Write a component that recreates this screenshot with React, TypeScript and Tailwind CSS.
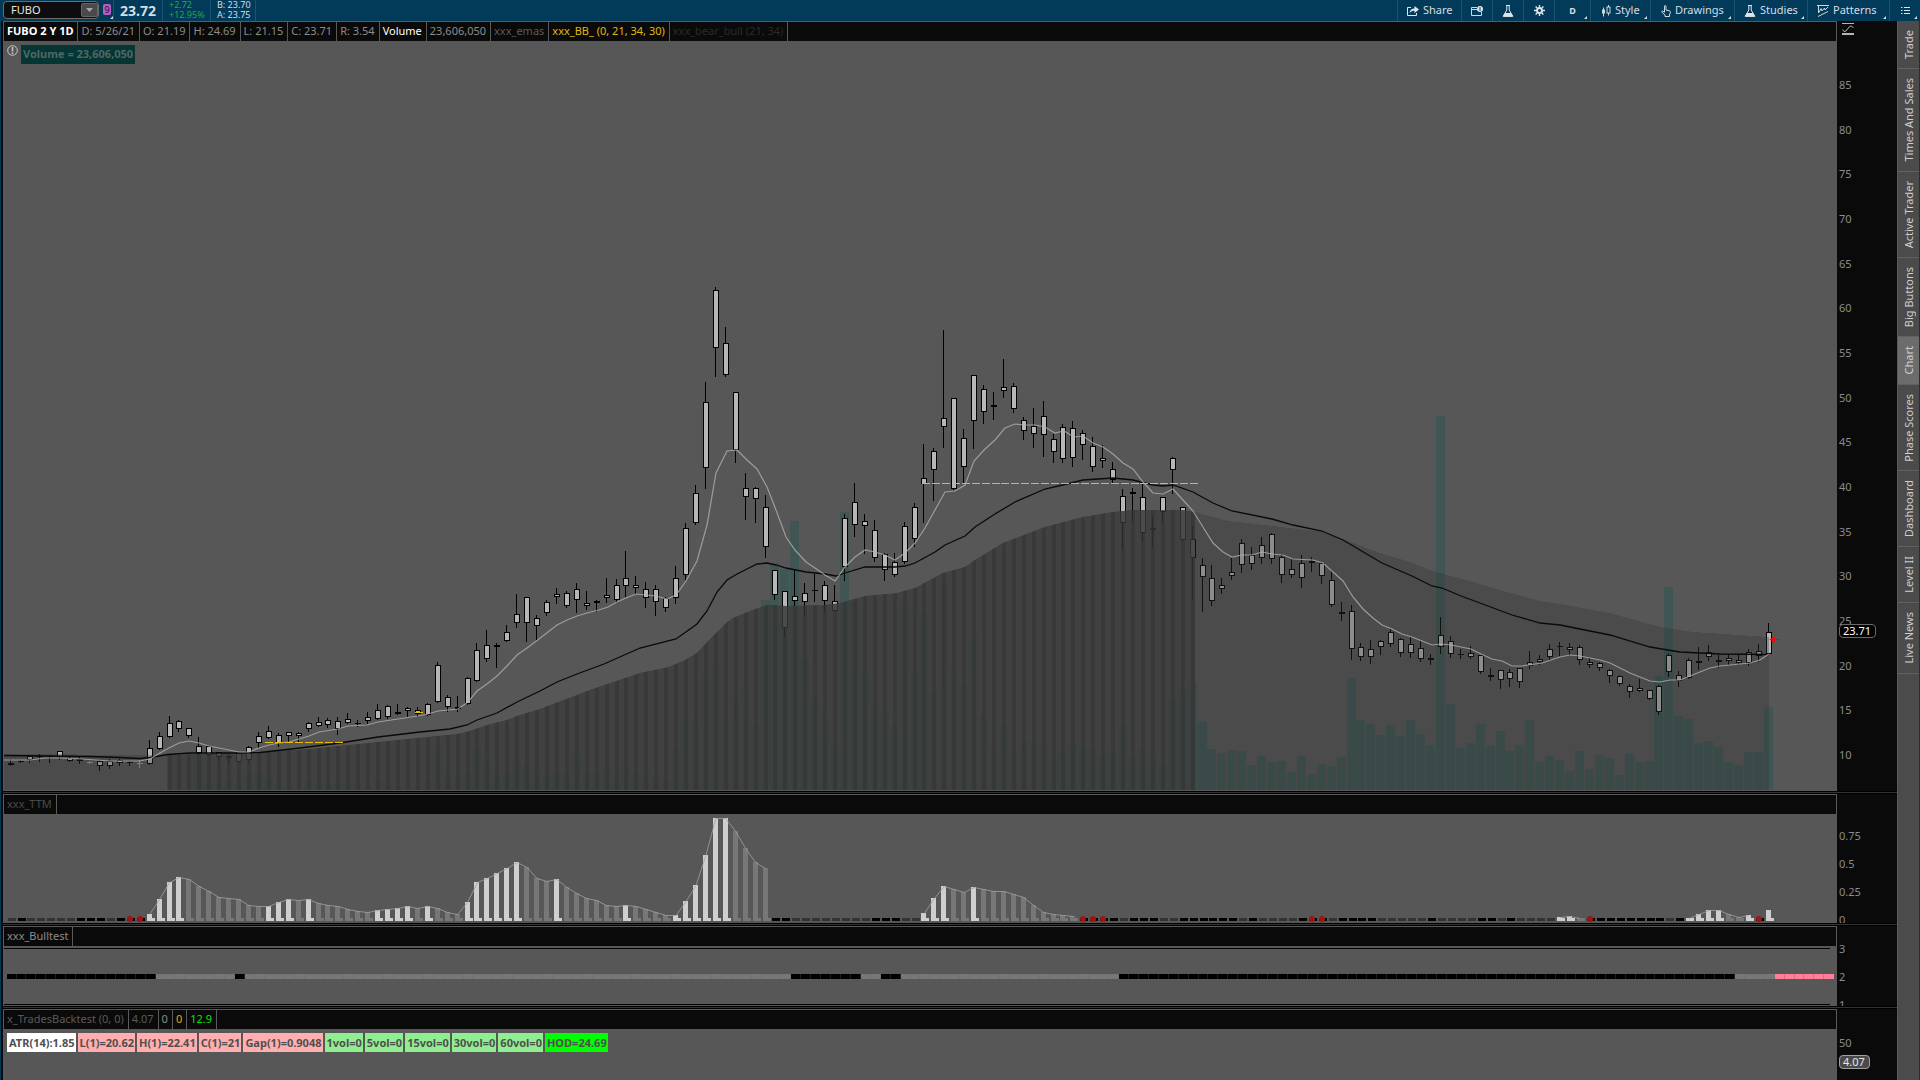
import type { ReactNode } from "react"

const PITCH = 9.933
const barX = (i: number) => 10.6 + i * PITCH

// high, body top, body bottom, low
const candles = [
    [759,763,765,765],[760,761,762,762],[755,756,760,762],[754,756,757,761],[755,756,757,762],[751,751,757,759],
    [757,758,761,761],[757,759,761,763],[761,762,763,763],[760,761,766,770],[759,761,766,768],[759,760,763,765],
    [761,762,763,765],[760,763,764,767],[740,748,764,764],[732,736,749,749],[716,723,737,737],[720,721,729,731],
    [728,728,736,737],[737,746,753,754],[746,746,755,755],[752,752,757,760],[756,756,758,763],[753,753,762,762],
    [746,747,760,762],[732,736,743,747],[726,731,738,738],[733,735,743,746],[732,732,736,742],[732,733,736,741],
    [722,723,729,731],[717,722,726,726],[718,720,725,727],[717,721,729,734],[713,719,723,723],[720,723,724,726],
    [712,717,721,723],[704,710,719,719],[705,706,717,718],[704,712,714,714],[707,708,711,716],[707,710,714,716],
    [703,704,715,715],[662,665,702,702],[695,697,707,711],[696,707,709,711],[677,678,704,704],[643,650,681,681],
    [630,645,659,661],[643,645,647,667],[625,632,641,641],[594,614,623,627],[597,597,623,641],[615,618,626,639],
    [600,602,613,615],[588,594,597,603],[591,593,606,607],[583,589,600,612],[591,603,606,609],[600,601,603,611],
    [578,595,598,602],[579,585,600,602],[551,578,586,596],[576,585,588,593],[582,589,598,607],[585,589,602,615],
    [597,598,608,611],[566,578,598,603],[523,528,575,579],[485,493,523,524],[382,402,468,488],[287,290,348,376],
    [327,343,375,376],[392,392,450,462],[473,488,497,519],[487,488,499,522],[495,507,547,557],[570,570,595,599],
    [591,591,628,637],[569,596,601,605],[583,593,602,615],[574,590,591,601],[581,585,601,612],[585,601,611,611],
    [514,518,567,580],[483,502,525,536],[514,521,526,553],[520,530,558,561],[553,554,570,580],[553,562,575,576],
    [522,526,562,563],[503,507,539,546],[444,478,484,522],[448,451,470,500],[330,418,427,447],[398,398,489,489],
    [429,438,467,483],[375,375,421,448],[385,389,412,423],[392,405,407,419],[359,387,391,397],[383,386,409,412],
    [417,420,431,439],[408,426,434,447],[401,416,435,456],[434,439,452,462],[424,427,459,462],[421,428,458,466],
    [430,433,445,459],[437,446,467,471],[445,458,461,467],[462,469,480,483],[489,496,523,549],[488,492,494,521],
    [483,497,533,541],[516,528,530,547],[497,497,512,521],[457,458,470,493],[507,507,540,540],[526,539,558,599],
    [558,565,577,611],[565,578,601,605],[578,585,589,593],[558,572,576,579],[539,543,565,572],[547,555,564,569],
    [537,545,558,563],[533,534,559,563],[554,557,575,582],[559,569,575,577],[555,563,578,587],[557,561,563,571],
    [562,563,576,583],[570,580,605,606],[602,612,614,620],[605,611,649,659],[643,647,657,660],[640,649,657,663],
    [640,641,647,654],[629,632,644,646],[638,639,653,656],[637,644,653,657],[641,648,659,661],[654,658,660,664],
    [617,635,647,653],[636,641,654,657],[649,654,655,658],[646,653,657,658],[655,655,672,673],[668,675,677,680],
    [670,670,680,688],[669,672,679,686],[668,668,682,687],[651,662,666,668],[655,659,662,664],[644,649,657,659],
    [642,646,647,655],[643,647,650,655],[645,647,660,664],[658,662,665,667],[662,663,668,670],[669,670,676,682],
    [675,676,684,685],[684,686,692,697],[679,688,691,691],[690,690,699,699],[685,686,712,714],[653,655,672,676],
    [671,675,681,686],[658,660,678,678],[647,661,663,669],[645,652,657,660],[655,660,662,667],[654,658,661,664],
    [655,660,663,664],[649,652,663,665],[644,651,656,661],[623,632,654,654],
]

// top of each volume bar, starting at bar 19
const volume = [
    753,783,784,779,785,773,772,778,784,786,785,781,783,784,782,783,784,785,780,785,786,784,786,779,746,774,775,774,
    747,762,775,773,761,765,771,777,771,773,754,773,774,766,775,762,774,770,775,780,749,719,721,675,664,720,697,686,
    723,600,563,569,521,658,698,717,744,512,602,674,705,712,725,603,672,614,692,582,671,684,634,716,751,725,753,742,
    742,745,760,752,744,747,750,755,750,725,756,748,756,764,698,690,683,722,749,753,750,751,765,756,762,761,772,756,
    774,764,766,757,678,720,724,735,725,736,720,734,745,416,704,748,743,724,746,731,751,745,720,762,756,760,771,751,
    769,755,758,775,754,762,761,676,587,716,719,743,741,747,762,765,752,752,707,
]

const fastLine =
    "4,760 30,760 45,758 60,758 82,759 110,761 139,761 150,759 160,753 169,748 179,743 189,741 199,743 209,746 229,750 239,752 249,752 259,748 269,745 279,743 289,742 299,739 309,736 319,732 338,729 348,726 367,725 378,722 398,719 418,716 428,714 438,711 458,709 468,702 477,691 487,684 497,676 507,666 517,655 527,648 539,639 557,625 567,620 577,616 587,613 599,610 608,607 617,602 626,598 636,594 646,595 656,596 667,599 676,595 686,581 697,561 707,525 716,473 727,451 737,450 747,460 757,469 767,487 776,510 786,537 795,550 806,562 815,568 825,575 835,581 845,567 855,557 865,550 875,552 885,555 895,560 905,553 915,543 925,528 935,510 945,492 955,491 965,485 974,461 984,450 995,440 1005,428 1015,424 1025,425 1035,425 1045,427 1055,433 1064,431 1074,437 1083,436 1093,443 1103,447 1113,454 1123,463 1133,469 1143,482 1153,493 1163,494 1173,489 1183,500 1193,511 1203,527 1213,543 1223,552 1232,557 1242,555 1252,555 1262,552 1272,554 1283,555 1293,559 1313,560 1323,563 1333,572 1343,581 1353,597 1363,609 1373,618 1382,625 1392,629 1402,634 1412,637 1422,641 1432,645 1441,644 1451,645 1471,649 1481,654 1492,659 1502,661 1512,666 1522,666 1542,663 1560,657 1570,655 1580,656 1600,660 1610,663 1630,673 1650,681 1660,682 1670,680 1680,680 1700,672 1710,668 1720,666 1740,664 1750,663 1760,660 1769,654"

const slowLine =
    "4,755.5 90,756.5 120,757.5 140,758.5 150,757.5 168,754.5 190,753 240,753 260,752.5 300,748 340,743 378,737 420,732 450,729 467,725 477,720 497,713 517,702 540,691 557,682 577,674 604,664 640,648 676,639 697,624 707,611 717,592 727,580 737,574 747,569 757,564 767,563 776,565 786,568 806,572 825,574 836,576 845,573 865,567 895,567 905,566 915,563 935,552 945,545 965,536 975,527 995,514 1015,502 1045,489 1067,484 1083,480 1113,478 1133,480 1153,485 1163,486 1173,485 1193,492 1213,503 1232,511 1272,519 1293,525 1322,531 1343,540 1382,563 1412,576 1432,586 1442,588 1461,596 1480,603 1512,615 1540,623 1560,625 1610,635 1650,647 1680,652 1720,654 1769,654.5"

const cloud =
    "4,790 4,754 150,755 167,755 240,753 260,752 309,749 348,745 398,740 457,734 470,731 487,725 507,720 517,716 540,709 590,690 640,673 669,667 685,660 697,653 709,640 717,632 726,623 733,618 750,611 767,605 787,606 825,605 840,603 865,596 897,593 915,588 943,573 965,567 975,560 1003,543 1045,527 1083,517 1113,512 1133,510 1183,510 1195,512 1213,517 1228,521 1273,526 1323,532 1340,538 1380,553 1407,561 1433,571 1473,582 1507,592 1540,601 1560,604 1610,613 1660,627 1693,632 1769,637 1769,790"

// runs of momentum bars: first index, tops, and w (rising) or g (falling) for each
const momentum = [
    {
        start: 14,
        tops: [914,899,882,877,879,886,891,897,898,899,905,906,906,902,899,900,899,903,905,906,909,911,912,910,909,908,906,908,906,908,912,914,902,882,878,873,868,862,867,878,881,879,887,893,898,900,905,906,905,906,909,912,915,915,901,885,855,818,818,831,848,862,868],
        kinds: "wwwwggggggggwwwgwggggggwwwwgwgggwwwwwwgggwggggggwggggwwwwwwgggg",
    },
    { start: 92, tops: [913,898,886,889,892,887,889,891,891,894,897,905,912,914,915,916], kinds: "wwwggwgggggggggg" },
    { start: 156, tops: [917,916,918], kinds: "wwg" },
    { start: 169, tops: [918,914,910,910,914,917,915], kinds: "wwwwggw" },
    { start: 177, tops: [910], kinds: "w" },
]

// squeeze row: d = normal, k = squeeze, r = fired
const squeeze = [
    { start: 0, states: "dkdddddkkkdkrr" },
    { start: 77, states: "kkddddddddkkkdd" },
    { start: 108, states: "rrrkdkkkddkkkkkkdkddddkrrdkkkkdddddkddddkkdkdddd" },
    { start: 159, states: "rkkkkkkkdk" },
    { start: 176, states: "r" },
]

const trend = [
    { from: 0, to: 14, fill: "#000000" },
    { from: 15, to: 22, fill: "#777777" },
    { from: 23, to: 23, fill: "#000000" },
    { from: 24, to: 78, fill: "#777777" },
    { from: 79, to: 85, fill: "#000000" },
    { from: 86, to: 87, fill: "#777777" },
    { from: 88, to: 89, fill: "#000000" },
    { from: 90, to: 111, fill: "#777777" },
    { from: 112, to: 173, fill: "#000000" },
    { from: 174, to: 177, fill: "#777777" },
    { from: 178, to: 183, fill: "#ff7f9b" },
]

const tabs = ["Trade", "Times And Sales", "Active Trader", "Big Buttons", "Chart", "Phase Scores", "Dashboard", "Level II", "Live News"]
const prices = [85, 80, 75, 70, 65, 60, 55, 50, 45, 40, 35, 30, 25, 20, 15, 10]

const labels = [
    { text: "ATR(14):1.85", color: "bg-white" },
    { text: "L(1)=20.62", color: "bg-[#ffafaf]" },
    { text: "H(1)=22.41", color: "bg-[#ffafaf]" },
    { text: "C(1)=21", color: "bg-[#ffafaf]" },
    { text: "Gap(1)=0.9048", color: "bg-[#ffafaf]" },
    { text: "1vol=0", color: "bg-[#90ee90]" },
    { text: "5vol=0", color: "bg-[#90ee90]" },
    { text: "15vol=0", color: "bg-[#90ee90]" },
    { text: "30vol=0", color: "bg-[#90ee90]" },
    { text: "60vol=0", color: "bg-[#90ee90]" },
    { text: "HOD=24.69", color: "bg-[#00ff00]" },
]

const Candle = ({ i }: { i: number }) => {
    const [high, top, bottom, low] = candles[i]
    const x = Math.round(barX(i))
    const flat = bottom - top < 3
    const ink = i === 8 || i === 13 ? "#a0a0a0" : "#000000"
    return (
        <g>
            <rect x={x - 1} y={high} width={1} height={low - high + 1} fill={ink} />
            <rect x={x - 3} y={top} width={6} height={bottom - top} fill={ink} />
            {!flat && <rect x={x - 2} y={top + 1} width={4} height={bottom - top - 2} fill="#b7b7b7" />}
        </g>
    )
}

const PriceChart = () => (
    <svg className="block h-full w-full" viewBox="4 41 1833 749" preserveAspectRatio="none" shapeRendering="crispEdges">
        <defs>
            <clipPath id="cloud">
                <polygon points={cloud} />
            </clipPath>
        </defs>
        {volume.map((top, n) => (
            <rect key={n} x={Math.round(barX(n + 19)) - 5} y={top} width={9} height={790 - top} fill="#3f5654" />
        ))}
        {candles.map((_, i) => <Candle key={i} i={i} />)}
        <polygon points={cloud} fill="#313131" opacity={0.32} />
        <g clipPath="url(#cloud)">
            <rect x={167} y={400} width={1028} height={390} fill="#3d3d3d" opacity={0.69} />
            {candles.map((_, i) => i > 15 && i < 120 && (
                <rect key={i} x={Math.round(barX(i)) - 2} y={400} width={4} height={390} fill="#000000" opacity={0.11} />
            ))}
        </g>
        <g shapeRendering="auto" fill="none">
            <polyline points={slowLine} stroke="#0a0a0a" strokeWidth={1.3} />
            <polyline points={fastLine} stroke="#b4b4b4" strokeOpacity={0.75} strokeWidth={1.2} />
        </g>
        <g stroke="#e6bd00" strokeWidth={1} strokeDasharray="8 1.93">
            <line x1={265} y1={742.5} x2={343} y2={742.5} />
            <line x1={415} y1={712.5} x2={423} y2={712.5} />
            <line x1={922} y1={483.5} x2={1198} y2={483.5} />
        </g>
        <path d="M1769 639.5 L1775 636.5 V639 H1780 V640 H1775 V642.5 Z" fill="#ff0000" shapeRendering="auto" />
    </svg>
)

const MomentumChart = () => (
    <svg className="block h-full w-full" viewBox="4 814 1833 109" preserveAspectRatio="none" shapeRendering="crispEdges">
        {momentum.map((run) => (
            <g key={run.start}>
                {run.tops.map((top, n) => {
                    const x = Math.round(barX(run.start + n))
                    const fill = run.kinds[n] === "w" ? "#cfcfcf" : "#777777"
                    return (
                        <g key={n} fill={fill}>
                            <rect x={x - 3} y={top} width={5} height={921 - top} />
                            <rect x={x - 3} y={918} width={8} height={3} />
                        </g>
                    )
                })}
                <polyline
                    points={run.tops.map((top, n) => `${barX(run.start + n)},${top + 0.5}`).join(" ")}
                    fill="none"
                    stroke="#a0a0a0"
                    strokeOpacity={0.8}
                    strokeWidth={1}
                    shapeRendering="auto"
                />
            </g>
        ))}
        {squeeze.map((run) =>
            run.states.split("").map((state, n) => {
                const x = Math.round(barX(run.start + n))
                return (
                    <g key={run.start + n}>
                        <rect x={x - 3} y={918} width={8} height={3} fill={state === "d" ? "#333333" : "#000000"} />
                        {state === "r" && <circle cx={x} cy={919} r={3} fill="#a01414" shapeRendering="auto" />}
                    </g>
                )
            })
        )}
    </svg>
)

const TrendChart = () => (
    <svg className="block h-full w-full" viewBox="4 946 1833 60" preserveAspectRatio="none" shapeRendering="crispEdges">
        <rect x={4} y={948} width={1826} height={1} />
        <rect x={4} y={1004} width={1826} height={1} />
        {trend.map((run) => (
            <rect key={run.from} x={barX(run.from) - 4} y={974} width={(run.to - run.from + 1) * PITCH} height={5} fill={run.fill} />
        ))}
        {Array.from({ length: 184 }, (_, i) => (
            <rect key={i} x={Math.round(barX(i)) - 5} y={974} width={1} height={5} fill="#606060" opacity={0.3} />
        ))}
    </svg>
)

const BacktestChart = () => (
    <svg className="block h-full w-full" viewBox="4 1052 1833 28" preserveAspectRatio="none">
        <path
            d="M20 1062 h15 M92 1066 l10 -1 M145 1060 l10 -3 8 2 5 -1 M190 1068 l8 2 5 -2 M245 1058 l10 -2 8 3 M305 1060 l8 2 M370 1061 l20 1 M465 1058 l10 -2 8 4 M560 1061 l10 1 M672 1060 l20 -4 12 -1 M738 1071 l12 -2 10 2 24 -1 M840 1060 l6 -5 6 4 M868 1067 l16 1 M903 1057 l12 4 18 -1 M970 1057 l4 -3 6 5 M1180 1070 l12 -2 18 1 M1225 1063 l20 -3 M1330 1066 l24 3 M1432 1060 l12 0 M1520 1062 l26 1 M1690 1061 l10 0"
            fill="none"
            stroke="#4f6650"
            strokeWidth={1}
            opacity={0.5}
        />
    </svg>
)

const Cell = ({ children, color = "text-[#8c8c8c]" }: { children: ReactNode, color?: string }) => (
    <span className={`flex items-center whitespace-nowrap border-r border-[#5a5a5a] pl-[3px] pr-1 ${color}`}>{children}</span>
)

const Header = ({ children }: { children: ReactNode }) => (
    <div className="flex h-[19px] shrink-0 border-r border-[#5a5a5a] bg-[#0a0a0a]">{children}</div>
)

const Splitter = () => <div className="h-[3px] shrink-0 border-y border-black bg-[#333]" />

const Corner = () => <span className="absolute bottom-[2px] right-[3px] border-b-[3px] border-l-[3px] border-b-[#d8dde0] border-l-transparent" />

type ToolProps = { children: ReactNode, width: string, label: string, corner?: boolean }

const Tool = ({ children, width, label, corner }: ToolProps) => (
    <button aria-label={label} className={`relative flex items-center gap-1 border-l border-[#1d5272] ${width}`}>
        {children}
        {corner && <Corner />}
    </button>
)

const Flask = () => (
    <svg className="h-3 w-3 shrink-0" viewBox="0 0 12 12" fill="none" stroke="#dfe5e8">
        <path d="M4 .5h4M4.8 1v4L1.2 11.4h9.6L7.200 5V1" />
        <path d="M3 8.500h6l1.500 2.500h-9z" fill="#dfe5e8" />
    </svg>
)

const TopBar = () => (
    <header className="flex h-[21px] shrink-0 items-stretch bg-[#023a5a] text-[#d5dde2]">
        <div className="ml-[3px] mt-px flex h-[18px] w-24 items-center rounded-sm border border-[#6b6b6b] bg-[#0d0d0d]">
            <input aria-label="Symbol" defaultValue="FUBO" className="w-0 flex-1 bg-transparent pl-[7px] text-[11px] text-[#e6e6e6] outline-none" />
            <button aria-label="Symbol list" className="flex h-[14px] w-[17px] items-center justify-center rounded-xs border border-[#666] bg-[#4a4a4a]">
                <svg className="h-1 w-[7px]" viewBox="0 0 7 4"><path d="M0 0h7L3.500 4z" fill="#a8a8a8" /></svg>
            </button>
        </div>
        <div className="relative ml-1 w-[10px]">
            <span className="mt-1 flex h-[11px] w-2 items-center justify-center rounded-xs bg-[#b85cc8] text-[9px] leading-[11px] text-[#230a2a]">9</span>
            <span className="absolute bottom-[2px] right-0 border-b-[3px] border-l-[3px] border-b-[#d8dde0] border-l-transparent" />
        </div>
        <div className="flex w-[49px] items-center border-l border-[#1d5272] pl-1.5 text-[14px] font-bold leading-none">23.72</div>
        <div className="w-[48px] border-l border-[#1d5272] pl-1.5 text-[9px] leading-[10px] text-[#1fae3f]">
            <div>+2.72</div>
            <div>+12.95%</div>
        </div>
        <div className="w-[46px] whitespace-nowrap border-x border-[#1d5272] pl-1.5 text-[9px] leading-[10px]">
            <div>B: 23.70</div>
            <div>A: 23.75</div>
        </div>
        <div className="ml-auto flex text-[11px]">
            <Tool label="Share" width="w-16 pl-[9px]">
                <svg className="h-[11px] w-3 shrink-0" viewBox="0 0 12 11" fill="none" stroke="#dfe5e8">
                    <path d="M4 2.500H.5v8h9V8" />
                    <path d="M2.500 8c.5-3 2-4.500 5-4.500V1L12 4.500 7.500 8V5.800C5.500 5.800 4 6.300 2.500 8z" fill="#dfe5e8" stroke="none" />
                </svg>
                Share
            </Tool>
            <Tool label="Detach" width="w-[31px] justify-center">
                <svg className="h-[10px] w-3" viewBox="0 0 12 10" fill="none" stroke="#cfd8dd">
                    <path d="M6 1.500H.5v8h10V6M.5 3.500H6" />
                    <circle cx="9" cy="3" r="3" fill="#dfe5e8" stroke="none" />
                    <path d="M9 1.200v3.600" stroke="#023a5a" />
                </svg>
            </Tool>
            <Tool label="Lab" width="w-[31px] justify-center"><Flask /></Tool>
            <Tool label="Settings" width="w-[31px] justify-center">
                <svg className="h-[11px] w-[11px]" viewBox="0 0 11 11" fill="none" stroke="#dfe5e8">
                    <circle cx="5.500" cy="5.500" r="2.500" strokeWidth="2" />
                    <path d="M5.500 0v2M5.500 9v2M0 5.500h2M9 5.500h2M1.600 1.600l1.500 1.500M7.900 7.900l1.500 1.500M9.400 1.600L7.900 3.100M3.100 7.900L1.600 9.400" strokeWidth="1.400" />
                </svg>
            </Tool>
            <Tool label="Day" width="w-9 justify-center text-[9px] font-bold" corner>D</Tool>
            <Tool label="Style" width="w-[60px] pl-[10px]" corner>
                <svg className="h-3 w-[10px] shrink-0" viewBox="0 0 10 12" fill="none" stroke="#cfd8dd">
                    <path d="M2.500 2.500v9M7.500 0v2M7.500 8v2.500" />
                    <rect x="1" y="4.500" width="3" height="4" fill="#cfd8dd" stroke="none" />
                    <rect x="6" y="2" width="3" height="6" />
                </svg>
                Style
            </Tool>
            <Tool label="Drawings" width="w-[84px] pl-[10px]" corner>
                <svg className="h-3 w-[10px] shrink-0" viewBox="0 0 10 12" fill="none" stroke="#cfd8dd">
                    <path d="M3.500 7V1.200c0-1 1.500-1 1.500 0V5l3.500.8c1 .3 1 1 .8 2L8.500 10v1.500H4V10L.8 7.200c-.5-.8.5-1.500 1.200-1L3.500 7.500" />
                </svg>
                Drawings
            </Tool>
            <Tool label="Studies" width="w-[73px] pl-[9px]" corner><Flask />Studies</Tool>
            <Tool label="Patterns" width="w-[82px] pl-[9px]" corner>
                <svg className="h-3 w-3 shrink-0" viewBox="0 0 12 12" fill="none" stroke="#cfd8dd">
                    <path d="M0 .5h12M1 11.500l10-5M1.500 1v7L4 3.500 5 6l2.500-3L8 5l3-3" />
                </svg>
                Patterns
            </Tool>
            <Tool label="Menu" width="w-[31px] justify-center" corner>
                <svg className="h-[9px] w-[9px]" viewBox="0 0 9 9" stroke="#dfe5e8">
                    <path d="M0 1.500h1.500M3 1.500h6M0 4.500h1.500M3 4.500h6M0 7.500h1.500M3 7.500h6" />
                </svg>
            </Tool>
        </div>
    </header>
)

const Axis = ({ children }: { children?: ReactNode }) => (
    <div className="relative flex w-[60px] shrink-0 flex-col overflow-hidden bg-[#0a0a0a] pl-0.5 text-[11px] leading-[16px] text-[#8c8c8c]">{children}</div>
)

const SideTabs = () => (
    <nav className="flex w-[23px] shrink-0 flex-col border-l border-r border-l-[#5a5a5a] border-r-[#023a5a] bg-[#4b4b4b] text-[11px] leading-[20px] text-[#cfcfcf]">
        {tabs.map((tab) => (
            <button key={tab} className={`flex justify-center border-b border-[#616161] py-[9px] ${tab === "Chart" ? "bg-[#6c6c6c]" : ""}`}>
                <span className="rotate-180 [writing-mode:vertical-rl]">{tab}</span>
            </button>
        ))}
    </nav>
)

export default function App() {
    return (
        <div className="flex h-screen min-h-[640px] flex-col overflow-hidden bg-[#0a0a0a] font-['Noto_Sans',sans-serif]">
            <TopBar />
            <div className="flex min-h-0 flex-1">
                <div className="w-[3px] shrink-0 border-l border-[#023a5a]" />
                <main className="flex min-w-0 flex-1 flex-col text-[11px]">
                    <section className="flex min-h-0 flex-1">
                        <div className="flex min-w-0 flex-1 flex-col border-l border-y border-[#5a5a5a]">
                            <Header>
                                <Cell color="font-bold text-white">FUBO 2 Y 1D</Cell>
                                <Cell>D: 5/26/21</Cell>
                                <Cell>O: 21.19</Cell>
                                <Cell>H: 24.69</Cell>
                                <Cell>L: 21.15</Cell>
                                <Cell>C: 23.71</Cell>
                                <Cell>R: 3.54</Cell>
                                <Cell color="text-white">Volume</Cell>
                                <Cell>23,606,050</Cell>
                                <Cell color="text-[#5a5a5a]">xxx_emas</Cell>
                                <Cell color="text-[#e0b814]">xxx_BB_ (0, 21, 34, 30)</Cell>
                                <Cell color="text-[#2a2a2a]">xxx_bear_bull (21, 34)</Cell>
                            </Header>
                            <div className="relative min-h-0 flex-1 bg-[#575757]">
                                <PriceChart />
                                <div className="absolute left-[3px] top-1 flex items-start gap-[3px]">
                                    <svg className="h-[11px] w-[11px]" viewBox="0 0 11 11" fill="none" stroke="#c8c8c8">
                                        <circle cx="5.500" cy="5.500" r="4.800" />
                                        <path d="M5.500 2v4.500M5.500 7.500v1.500" strokeWidth="1.500" />
                                    </svg>
                                    <span className="flex h-[19px] items-center whitespace-nowrap bg-[#053633] px-0.5 font-bold text-[#4f6765]">Volume = 23,606,050</span>
                                </div>
                            </div>
                        </div>
                        <Axis>
                            <svg className="absolute left-[5px] top-[2px] h-3 w-3" viewBox="0 0 12 12" fill="none" stroke="#b4b4b4">
                                <path d="M0 .5h12" />
                                <path d="M0 11h12" strokeWidth="2" />
                                <path d="M.5 6.500 2 8.500l2-.5 3.500-4.500 2-.5 2 2" />
                            </svg>
                            <div className="flex h-full flex-col justify-between pb-[28px] pt-[56px]">
                                {prices.map((price) => <span key={price}>{price}</span>)}
                            </div>
                            <span className="absolute bottom-[153px] left-0.5 rounded border border-[#6a6a6a] bg-black pl-[3px] pr-1 leading-[12px] text-white">23.71</span>
                        </Axis>
                    </section>
                    <Splitter />
                    <section className="flex h-[129px] shrink-0">
                        <div className="flex min-w-0 flex-1 flex-col border-l border-t border-[#5a5a5a]">
                            <Header><Cell color="text-[#4a4a4a]">xxx_TTM</Cell></Header>
                            <div className="h-[109px] bg-[#575757]"><MomentumChart /></div>
                        </div>
                        <Axis>
                            <div className="flex flex-col gap-3 pt-[34px]">
                                <span>0.75</span>
                                <span>0.5</span>
                                <span>0.25</span>
                                <span>0</span>
                            </div>
                        </Axis>
                    </section>
                    <Splitter />
                    <section className="flex h-20 shrink-0">
                        <div className="flex min-w-0 flex-1 flex-col border-l border-t border-[#5a5a5a]">
                            <Header><Cell>xxx_Bulltest</Cell></Header>
                            <div className="h-[60px] bg-[#575757]"><TrendChart /></div>
                        </div>
                        <Axis>
                            <div className="flex flex-col gap-3 pt-[15px]">
                                <span>3</span>
                                <span>2</span>
                                <span>1</span>
                            </div>
                        </Axis>
                    </section>
                    <Splitter />
                    <section className="flex shrink-0">
                        <div className="flex min-w-0 flex-1 flex-col border-l border-t border-[#5a5a5a]">
                            <Header>
                                <Cell color="text-[#5a5a5a]">x_TradesBacktest (0, 0)</Cell>
                                <Cell color="text-[#5a5a5a]">4.07</Cell>
                                <Cell>0</Cell>
                                <Cell color="text-[#e0a814]">0</Cell>
                                <Cell color="text-[#00e600]">12.9</Cell>
                            </Header>
                            <div className="bg-[#575757]">
                                <div className="flex gap-0.5 pl-[3px] pt-1">
                                    {labels.map((label) => (
                                        <span key={label.text} className={`whitespace-nowrap pl-0.5 pr-px font-bold leading-[19px] text-[#4f4f4f] ${label.color}`}>{label.text}</span>
                                    ))}
                                </div>
                                <div className="h-7"><BacktestChart /></div>
                            </div>
                        </div>
                        <Axis>
                            <span className="pt-[26px]">50</span>
                            <span className="absolute bottom-[11px] left-0.5 rounded border border-[#a0a0a0] bg-[#4a4a4a] pl-[3px] pr-1 leading-[12px] text-[#e6e6e6]">4.07</span>
                        </Axis>
                    </section>
                </main>
                <SideTabs />
            </div>
        </div>
    )
}
